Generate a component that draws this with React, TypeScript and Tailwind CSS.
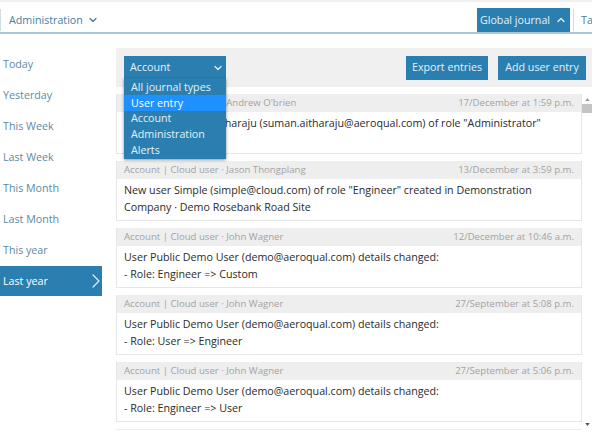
import { ChevronDown, ChevronUp, ChevronRight } from 'lucide-react';

const ranges = ['Today', 'Yesterday', 'This Week', 'Last Week', 'This Month', 'Last Month', 'This year'];

const options = ['All journal types', 'User entry', 'Account', 'Administration', 'Alerts'];

const entries = [
  {
    who: 'Account | Cloud user · Andrew O\'brien',
    when: '17/December at 1:59 p.m.',
    lines: ['New user Suman Aitharaju (suman.aitharaju@aeroqual.com) of role "Administrator"'],
  },
  {
    who: 'Account | Cloud user · Jason Thongplang',
    when: '13/December at 3:59 p.m.',
    lines: ['New user Simple (simple@cloud.com) of role "Engineer" created in Demonstration', 'Company · Demo Rosebank Road Site'],
  },
  {
    who: 'Account | Cloud user · John Wagner',
    when: '12/December at 10:46 a.m.',
    lines: ['User Public Demo User (demo@aeroqual.com) details changed:', '- Role: Engineer => Custom'],
  },
  {
    who: 'Account | Cloud user · John Wagner',
    when: '27/September at 5:08 p.m.',
    lines: ['User Public Demo User (demo@aeroqual.com) details changed:', '- Role: User => Engineer'],
  },
  {
    who: 'Account | Cloud user · John Wagner',
    when: '27/September at 5:06 p.m.',
    lines: ['User Public Demo User (demo@aeroqual.com) details changed:', '- Role: Engineer => User'],
  },
];

export default function App() {
  return (
    <div className="h-[444px] w-[592px] overflow-hidden whitespace-nowrap bg-white font-['Open_Sans',sans-serif] text-[10.7px]">
      <div className="h-[2px] bg-[#f0f0f0]" />
      <div className="flex h-[32px] items-end border-b-2 border-[#a9c6d3]">
        <div className="mb-[1px] flex h-[22px] items-center border-l border-[#cfdde4] pl-[8px] text-[#3f7fa3]">
          Administration
          <ChevronDown className="ml-[4px] h-3 w-3" strokeWidth={2.5} />
        </div>
        <div className="ml-auto flex h-[24px] w-[93px] items-center justify-center gap-[5px] bg-[#2a7fb0] text-[#e4f1f8]">
          Global journal
          <ChevronUp className="h-3 w-3" strokeWidth={2.5} />
        </div>
        <div className="ml-[3px] mb-[1px] flex h-[22px] w-[19px] items-center overflow-hidden border-l border-[#cfdde4] pl-[7px] text-[#3f7fa3]">
          Ta
        </div>
      </div>

      <div className="flex">
        <div className="mt-[15px] w-[102px] shrink-0">
          {ranges.map((r) => (
            <div key={r} className="flex h-[31px] items-center pl-[3px] text-[#5d8aa3]">
              {r}
            </div>
          ))}
          <div className="flex h-[30px] items-center justify-between bg-[#2a7fb0] pl-[3px] text-white">
            Last year
            <ChevronRight className="-mr-[6px] h-6 w-6 text-[#e4f1f8]" strokeWidth={1.2} />
          </div>
        </div>

        <div className="ml-[14px] mt-[14px] min-w-0 flex-1">
          <div className="relative flex h-[39px] items-center bg-[#f0f0f0] pl-[8px] pr-[6px]">
            <div className="flex h-[24px] w-[102px] items-center justify-between bg-[#2a7fb0] pl-[6px] pr-[2px] text-[#e4f1f8]">
              Account
              <ChevronDown className="h-3 w-3" strokeWidth={2.5} />
            </div>
            <div className="absolute left-[8px] top-[30px] z-10 w-[102px] bg-[#2a7fb0] py-[1px] text-[#e4f1f8] shadow-[0_1px_3px_rgba(0,0,0,0.45)]">
              {options.map((o) => (
                <div key={o} className={`flex h-[15.8px] items-center pl-[7px] ${o === 'User entry' ? 'bg-[#1e90ff] text-white' : ''}`}>
                  {o}
                </div>
              ))}
            </div>
            <button className="ml-auto h-[24px] w-[82px] bg-[#2a7fb0] text-[#e4f1f8]">Export entries</button>
            <button className="ml-[10px] h-[24px] w-[88px] bg-[#2a7fb0] text-[#e4f1f8]">Add user entry</button>
          </div>

          <div className="mt-[7px] flex h-[336px]">
            <div className="min-w-0 flex-1 overflow-hidden">
              {entries.map((e) => (
                <div key={e.when} className="mb-[7px] border border-t-0 border-[#e6e6e6]">
                  <div className="flex h-[18px] items-center justify-between bg-[#eeeeee] px-[7px] text-[9.6px] text-[#a3a3a3]">
                    <span>{e.who}</span>
                    <span>{e.when}</span>
                  </div>
                  <div className="h-[41px] pl-[7px] pt-[3px] leading-[17px] text-[#2b2b2b]">
                    {e.lines.map((l) => (
                      <div key={l}>{l}</div>
                    ))}
                  </div>
                </div>
              ))}
              <div className="h-[4px] bg-[#eeeeee]" />
            </div>
            <div className="flex w-[10px] shrink-0 flex-col items-center">
              <svg viewBox="0 0 6 4" className="mt-[4px] h-[3px] w-[5px] text-[#9a9a9a]">
                <path d="M3 0 6 4H0z" fill="currentColor" />
              </svg>
              <div className="mt-[3px] h-[9px] w-full bg-[#c4c4c4]" />
              <svg viewBox="0 0 6 4" className="mt-auto mb-[4px] h-[3px] w-[5px] text-[#555555]">
                <path d="M0 0h6L3 4z" fill="currentColor" />
              </svg>
            </div>
          </div>
        </div>
      </div>
    </div>
  );
}
